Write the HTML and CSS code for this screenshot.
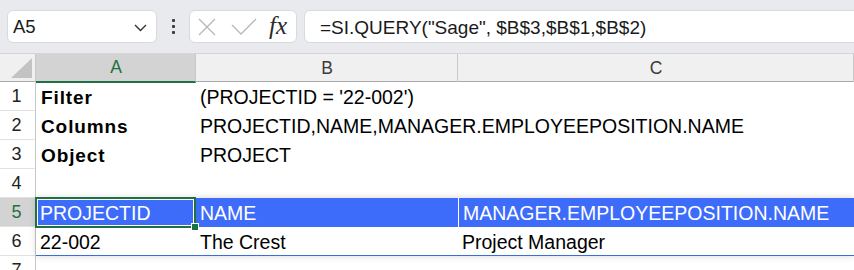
FILE: index.html
```html
<!DOCTYPE html>
<html>
<head>
<meta charset="utf-8">
<link rel="stylesheet" href="styles.css">
</head>
<body>
<div class="toolbar">
  <div class="namebox">
    <span class="nb-text">A5</span>
    <svg class="chev" width="13" height="8" viewBox="0 0 13 8"><polyline points="1,1 6.5,6.5 12,1" fill="none" stroke="#333" stroke-width="1.4"/></svg>
  </div>
  <div class="dots"><i></i><i></i><i></i></div>
  <div class="fbtns">
    <svg class="ico-x" width="18" height="18" viewBox="0 0 18 18"><path d="M1 1 L17 17 M17 1 L1 17" stroke="#b9b9b9" stroke-width="1.4" fill="none"/></svg>
    <svg class="ico-ok" width="26" height="18" viewBox="0 0 26 18"><polyline points="1,7 10,16 25,1" stroke="#b9b9b9" stroke-width="1.4" fill="none"/></svg>
    <span class="fx">fx</span>
  </div>
  <div class="formula">=SI.QUERY("Sage", $B$3,$B$1,$B$2)</div>
</div>

<div class="sheet">
  <div class="corner"><span class="tri"></span></div>
  <div class="colheads">
    <div class="ch ch-sel">A</div>
    <div class="ch">B</div>
    <div class="ch">C</div>
  </div>
  <div class="rowheads">
    <div class="rh">1</div>
    <div class="rh">2</div>
    <div class="rh">3</div>
    <div class="rh">4</div>
    <div class="rh rh-sel">5</div>
    <div class="rh">6</div>
    <div class="rh">7</div>
  </div>
  <div class="body">
    <div class="row"><div class="c b">Filter</div><div class="c">(PROJECTID = '22-002')</div><div class="c"></div></div>
    <div class="row"><div class="c b">Columns</div><div class="c span">PROJECTID,NAME,MANAGER.EMPLOYEEPOSITION.NAME</div><div class="c"></div></div>
    <div class="row"><div class="c b">Object</div><div class="c">PROJECT</div><div class="c"></div></div>
    <div class="row"><div class="c"></div><div class="c"></div><div class="c"></div></div>
    <div class="tbl">
      <div class="row hdr"><div class="c">PROJECTID</div><div class="c">NAME</div><div class="c cdiv">MANAGER.EMPLOYEEPOSITION.NAME</div></div>
      <div class="row last"><div class="c">22-002</div><div class="c">The Crest</div><div class="c">Project Manager</div></div>
      <div class="sel"><span class="handle"></span></div>
    </div>
    <div class="row"><div class="c"></div><div class="c"></div><div class="c"></div></div>
  </div>
</div>
</body>
</html>
```

FILE: styles.css
```css
html, body {
  margin: 0;
  padding: 0;
  width: 854px;
  height: 270px;
  overflow: hidden;
  background: #ffffff;
  font-family: "Liberation Sans", Arial, sans-serif;
}

.toolbar {
  border-bottom: 1px solid #d4d6d9;
  background: #e8eaed;
  display: flex;
  align-items: flex-start;
  padding-top: 10px;
  box-sizing: border-box;
  height: 54px;
}

.namebox {
  margin-left: 7px;
  width: 150px;
  height: 33px;
  box-sizing: border-box;
  background: #fff;
  border: 1px solid #d9dadd;
  border-radius: 6px;
  display: flex;
  align-items: center;
  justify-content: space-between;
  padding: 1px 9px 0 5px;
}

.nb-text {
  font-size: 18.5px;
  color: #1a1a1a;
}

.chev {
  margin-top: 1px;
}

.dots {
  width: 32px;
  height: 33px;
  display: flex;
  flex-direction: column;
  align-items: center;
  justify-content: center;
  gap: 3px;
}

.dots i {
  display: block;
  width: 3px;
  height: 3px;
  border-radius: 1px;
  background: #3a3a3a;
}

.fbtns {
  width: 108px;
  height: 33px;
  box-sizing: border-box;
  background: #fff;
  border: 1px solid #d9dadd;
  border-radius: 6px;
  display: flex;
  align-items: center;
  padding-left: 8px;
}

.ico-x {
  margin-right: 15px;
}

.ico-ok {
  margin-right: 12px;
}

.fx {
  font-family: "Liberation Serif", "Times New Roman", serif;
  font-style: italic;
  font-size: 25px;
  color: #2a2a2a;
  line-height: 1;
  margin-top: -3px;
}

.formula {
  margin-left: 7px;
  flex: 1;
  margin-right: -20px;
  height: 33px;
  box-sizing: border-box;
  background: #fff;
  border: 1px solid #d9dadd;
  border-radius: 6px;
  padding: 5px 0 0 15px;
  font-size: 19px;
  line-height: 24px;
  color: #1a1a1a;
  white-space: nowrap;
}

.sheet {
  display: grid;
  grid-template-columns: 36px 1fr;
  grid-template-rows: 28px auto;
}

.corner {
  background: #f0f0f0;
  border-right: 1px solid #c8c8c8;
  border-bottom: 1px solid #a9a9a9;
  box-sizing: border-box;
  position: relative;
}

.tri {
  position: absolute;
  right: 3px;
  bottom: 3px;
  width: 0;
  height: 0;
  border-left: 21px solid transparent;
  border-bottom: 20px solid #c3c3c3;
}

.colheads {
  display: grid;
  grid-template-columns: 160px 262px 1fr;
  background: #f0f0f0;
  border-bottom: 1px solid #a9a9a9;
  box-sizing: border-box;
}

.ch {
  font-size: 17.5px;
  color: #3b3b3b;
  text-align: center;
  line-height: 28px;
  border-right: 1px solid #c8c8c8;
  padding-left: 1px;
}

.ch-sel {
  background: #d3d3d3;
  color: #1e7145;
  border-bottom: 2px solid #1e7145;
  margin-bottom: -1px;
  line-height: 26px;
}

.rowheads {
  display: flex;
  flex-direction: column;
  border-right: 1px solid #c8c8c8;
  box-sizing: border-box;
}

.rh {
  height: 29px;
  box-sizing: border-box;
  border-bottom: 1px solid #e1e1e1;
  font-size: 18px;
  line-height: 29px;
  text-align: center;
  color: #222;
  padding-right: 2px;
}

.rh-sel {
  background: #d3d3d3;
  color: #1e7145;
}

.body {
  display: flex;
  flex-direction: column;
}

.row {
  display: grid;
  grid-template-columns: 160px 262px 1fr;
  height: 29px;
  box-sizing: border-box;
}

.c {
  font-size: 19.5px;
  line-height: 27px;
  padding: 2px 0 0 4px;
  color: #000;
  white-space: nowrap;
  overflow: visible;
}

.c.b {
  font-weight: bold;
  font-size: 19px;
  letter-spacing: 0.9px;
  padding-left: 5px;
}

.span {
  grid-column: span 2;
}

.tbl {
  position: relative;
  z-index: 1;
  box-shadow: 0 0 7px rgba(0, 0, 0, 0.16);
  background: #fff;
}

.row.hdr {
  background: #3d6cfb;
}

.row.hdr .c {
  color: #ffffff;
}

.cdiv {
  border-left: 1px solid #ffffff;
}

.row.last {
  border-bottom: 1px solid #3a6fd6;
}

.sel {
  position: absolute;
  left: -1px;
  top: -1px;
  width: 161px;
  height: 31px;
  box-sizing: border-box;
  border: 2px solid #1e7145;
  box-shadow: inset 0 0 0 1px #ffffff;
}

.handle {
  position: absolute;
  right: -5px;
  bottom: -5px;
  width: 6px;
  height: 6px;
  background: #1e7145;
  border: 1px solid #ffffff;
}
```
